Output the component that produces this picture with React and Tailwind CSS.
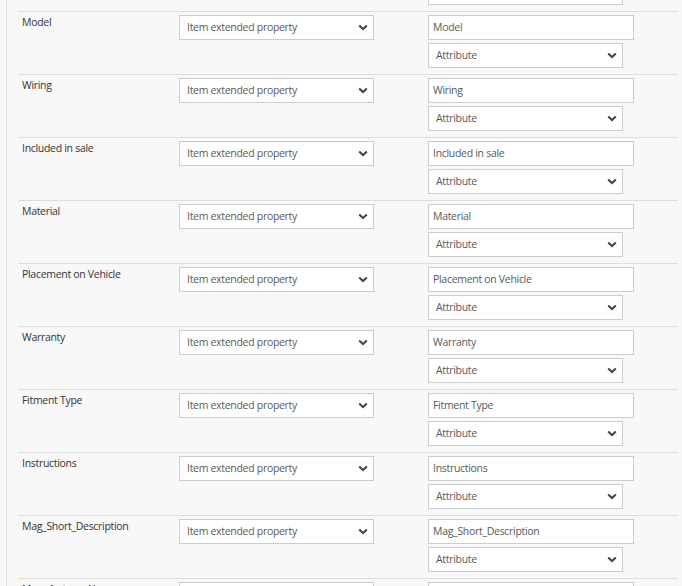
const fields = [
  "Model",
  "Wiring",
  "Included in sale",
  "Material",
  "Placement on Vehicle",
  "Warranty",
  "Fitment Type",
  "Instructions",
  "Mag_Short_Description",
  "Manufacturer Name",
];

function Chevron() {
  return (
    <svg width="10" height="7" viewBox="0 0 10 7" className="shrink-0">
      <path d="M1.2 1.4 L5 5 L8.8 1.4" fill="none" stroke="#444" strokeWidth="2" />
    </svg>
  );
}

function SelectBox({ value }) {
  return (
    <div className="flex h-[25px] w-[195px] items-center justify-between border border-[#cccccc] bg-white pl-[7px] pr-[5px] text-[#5a5a5a]">
      <span>{value}</span>
      <Chevron />
    </div>
  );
}

function MappingRow({ name }) {
  return (
    <div className="flex h-[63px] border-t border-[#dddddd] pt-[3px]">
      <div className="w-[161px] pl-1 text-[#333]">{name}</div>
      <SelectBox value="Item extended property" />
      <div className="ml-[54px] flex flex-col gap-[3px]">
        <div className="flex h-[25px] w-[206px] items-center border border-[#cccccc] bg-white px-[4px] text-[#5a5a5a]">
          {name}
        </div>
        <SelectBox value="Attribute" />
      </div>
    </div>
  );
}

export default function App() {
  return (
    <div className="h-[586px] overflow-hidden bg-[#f8f8f8] font-['Open_Sans',sans-serif] text-[10.5px] tracking-[-0.3px]">
      <div className="ml-[6px] h-full border-l border-[#e2e2e2] pl-[11px] pr-1">
        <div className="h-[11px] overflow-hidden">
          <div className="-mt-[20px] ml-[410px] h-[25px] w-[195px] border border-[#cccccc] bg-white" />
        </div>
        {fields.map((f) => (
          <MappingRow key={f} name={f} />
        ))}
      </div>
    </div>
  );
}
